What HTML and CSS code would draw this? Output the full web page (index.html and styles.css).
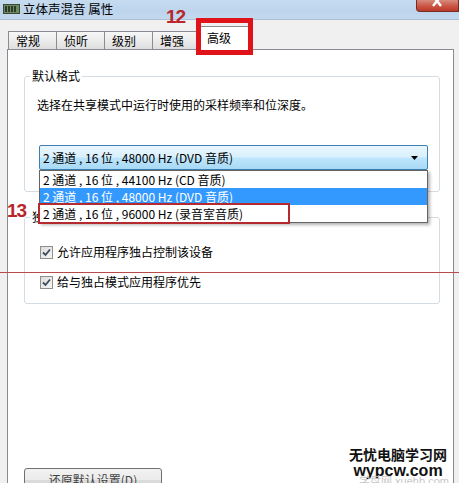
FILE: index.html
```html
<!DOCTYPE html>
<html lang="zh-CN">
<head>
    <meta charset="UTF-8">
    <title>立体声混音 属性</title>
    <link rel="stylesheet" href="styles.css">
</head>
<body>

<div class="window">
    <!-- title bar -->
    <div class="titlebar">
        <svg class="app-icon" width="17" height="10" viewBox="0 0 17 10">
            <rect x="0" y="0" width="17" height="10" fill="#3d4a3a"/>
            <rect x="1" y="1" width="15" height="8" fill="#6f8a5f"/>
            <rect x="2" y="2" width="2" height="6" fill="#2c3a2a"/>
            <rect x="5" y="2" width="2" height="6" fill="#2c3a2a"/>
            <rect x="8" y="2" width="2" height="6" fill="#2c3a2a"/>
            <rect x="11" y="2" width="2" height="6" fill="#2c3a2a"/>
        </svg>
        <span class="title">立体声混音 属性</span>
        <div class="close-btn">
            <svg width="16" height="12" viewBox="0 0 16 12">
                <path d="M3 -4 L11 6 M11 -4 L3 6" stroke="#fff" stroke-width="2.4" fill="none"/>
            </svg>
        </div>
    </div>

    <div class="frame">
        <div class="tabs">
            <div class="tab">常规</div>
            <div class="tab">侦听</div>
            <div class="tab">级别</div>
            <div class="tab">增强</div>
            <div class="tab active">高级</div>
        </div>

        <div class="page">
            <fieldset class="group first">
                <legend>默认格式</legend>
                <p class="hint">选择在共享模式中运行时使用的采样频率和位深度。</p>
                <div class="combo">
                    <span>2 通道 , 16 位 , 48000 Hz (DVD 音质)</span>
                    <svg class="arrow" width="7" height="4" viewBox="0 0 7 4"><path d="M0 0 H7 L3.5 4 Z" fill="#000"/></svg>
                    <ul class="dropdown">
                        <li>2 通道 , 16 位 , 44100 Hz (CD 音质)</li>
                        <li class="selected">2 通道 , 16 位 , 48000 Hz (DVD 音质)</li>
                        <li>2 通道 , 16 位 , 96000 Hz (录音室音质)</li>
                    </ul>
                </div>
            </fieldset>

            <fieldset class="group second">
                <legend>独占模式</legend>
                <label class="check-row">
                    <span class="checkbox"><svg width="9" height="9" viewBox="0 0 9 9"><path d="M1 4.5 L3.5 7 L8 1.5" stroke="#3c4a5c" stroke-width="1.8" fill="none"/></svg></span>
                    允许应用程序独占控制该设备
                </label>
                <label class="check-row">
                    <span class="checkbox"><svg width="9" height="9" viewBox="0 0 9 9"><path d="M1 4.5 L3.5 7 L8 1.5" stroke="#3c4a5c" stroke-width="1.8" fill="none"/></svg></span>
                    给与独占模式应用程序优先
                </label>
            </fieldset>

            <button class="reset">还原默认设置(D)</button>
        </div>
    </div>

    <!-- annotations drawn over the screenshot -->
    <div class="mark-tab"></div>
    <span class="num num-12">12</span>
    <span class="num num-13">13</span>
    <div class="mark-item"></div>
    <div class="red-line"></div>

    <div class="watermark">
        <div class="wm-cn">无忧电脑学习网</div>
        <div class="wm-en">wypcw.com</div>
        <div class="wm-faint">学盘网 xuehb.com</div>
    </div>
</div>

</body>
</html>
```

FILE: styles.css
```css
body {
    margin: 0;
    background: #ffffff;
    font-family: "Noto Sans CJK SC", "DejaVu Sans", sans-serif;
    font-size: 12px;
    color: #000;
}

.window {
    position: relative;
    width: 459px;
    height: 483px;
    overflow: hidden;
    background: #f0f0f0;
}

/* Title bar */
.titlebar {
    display: flex;
    align-items: flex-start;
    height: 20px;
    background: linear-gradient(180deg, #c6dbef 0%, #bcd4ec 60%, #c4d9ee 100%);
    border-bottom: 1px solid #a9bfd6;
    box-sizing: border-box;
}

.app-icon {
    margin: 4px 0 0 3px;
}

.title {
    margin: 1px 0 0 3px;
    line-height: 16px;
    font-size: 12.5px;
}

.close-btn {
    margin-left: auto;
    width: 43px;
    height: 12px;
    display: flex;
    justify-content: center;
    background: linear-gradient(180deg, #d88b7d 0%, #c9513f 60%, #b93a2a 100%);
    border: 1px solid #7a2c22;
    border-top: none;
    border-radius: 0 0 0 4px;
    box-sizing: border-box;
}

/* Frame + tabs */
.frame {
    padding: 0 5px 0 7px;
    height: 463px;
    box-sizing: border-box;
}

.tabs {
    display: flex;
    align-items: flex-end;
    height: 29px;
    padding-left: 1px;
}

.tab {
    width: 48px;
    height: 18px;
    box-sizing: border-box;
    padding-left: 7px;
    line-height: 17px;
    border: 1px solid #898c95;
    border-bottom: none;
    border-right: none;
    background: linear-gradient(180deg, #f7f7f7 0%, #ececec 50%, #dedede 100%);
}

.tab.active {
    width: 49px;
    height: 24px;
    padding-left: 6px;
    line-height: 22px;
    margin-bottom: -1px;
    position: relative;
    background: #ffffff;
    border-right: 1px solid #898c95;
}

.page {
    background: #ffffff;
    border: 1px solid #898c95;
    height: 440px;
    box-sizing: border-box;
}

/* Group boxes */
.group {
    margin: 0 13px 0 16px;
    padding: 0 11px 0 5px;
    border: 1px solid #d5dde3;
    border-radius: 3px;
    min-width: 0;
}

.group legend {
    padding: 0 2px;
    line-height: 16px;
}

.group.first {
    margin-top: 18px;
    padding-bottom: 21px;
}

.group.second {
    margin-top: 17px;
    padding-bottom: 13px;
}

.hint {
    margin: 13px 0 0 7px;
    line-height: 16px;
}

.combo {
    position: relative;
    margin: 32px 0 0 9px;
    height: 25px;
    box-sizing: border-box;
    border: 1px solid #3c7fb1;
    border-radius: 2px;
    background: linear-gradient(180deg, #eaf6fd 0%, #d9f0fc 48%, #bee6fd 52%, #a7d9f5 100%);
    display: flex;
    align-items: center;
    padding-left: 3px;
    line-height: 16px;
}

.combo .arrow {
    margin-left: auto;
    margin-right: 9px;
}

.dropdown {
    position: absolute;
    top: calc(100% + 1px);
    left: -1px;
    right: -1px;
    margin: 0;
    padding: 0;
    list-style: none;
    background: #ffffff;
    border: 1px solid #646464;
    box-shadow: 2px 2px 3px rgba(0, 0, 0, 0.3);
    z-index: 2;
}

.dropdown li {
    height: 17px;
    line-height: 17px;
    padding-left: 3px;
}

.dropdown li.selected {
    background: #3399ff;
    color: #ffffff;
}

.check-row {
    display: flex;
    align-items: center;
    margin-left: 10px;
    height: 16px;
    line-height: 16px;
}

.check-row:first-of-type {
    margin-top: 19px;
}

.check-row + .check-row {
    margin-top: 14px;
}

.checkbox {
    width: 13px;
    height: 13px;
    box-sizing: border-box;
    border: 1px solid #8f8f8f;
    background: linear-gradient(135deg, #dcdcdc 0%, #f6f6f6 100%);
    display: flex;
    align-items: center;
    justify-content: center;
    margin-right: 4px;
}

.reset {
    display: block;
    margin: 164px 0 0 16px;
    width: 138px;
    height: 23px;
    padding: 0;
    border: 1px solid #707070;
    border-radius: 3px;
    background: linear-gradient(180deg, #f2f2f2 0%, #ebebeb 50%, #dddddd 51%, #cfcfcf 100%);
    font-family: "Noto Sans CJK SC", sans-serif;
    font-size: 12px;
    line-height: 16px;
    color: #444;
}

/* Annotation marks */
.mark-tab {
    position: absolute;
    left: 196px;
    top: 18px;
    width: 57px;
    height: 37px;
    box-sizing: border-box;
    border: 5px solid #e0121a;
}

.num {
    position: absolute;
    font-family: "Liberation Sans", sans-serif;
    font-size: 19px;
    font-weight: bold;
    line-height: 19px;
    letter-spacing: -1px;
    color: #b8252b;
}

.num-12 {
    left: 166px;
    top: 7px;
}

.num-13 {
    left: 7px;
    top: 201px;
}

.mark-item {
    position: absolute;
    left: 38px;
    top: 203px;
    width: 252px;
    height: 21px;
    box-sizing: border-box;
    border: 2px solid #b52a2f;
    z-index: 3;
}

.red-line {
    position: absolute;
    left: 0;
    right: 0;
    top: 272px;
    height: 1px;
    background: #b84a4a;
}

.watermark {
    position: absolute;
    left: 346px;
    top: 445px;
    width: 104px;
    text-align: center;
}

.wm-cn {
    font-size: 14px;
    font-weight: bold;
    line-height: 18px;
    color: #111;
}

.wm-en {
    font-family: "Liberation Sans", sans-serif;
    font-size: 16px;
    font-weight: bold;
    line-height: 16px;
    color: #111;
}

.wm-faint {
    font-family: "Liberation Sans", sans-serif;
    font-size: 11px;
    line-height: 11px;
    color: #c8c8c8;
    margin-top: -3px;
    padding-left: 12px;
}
```
